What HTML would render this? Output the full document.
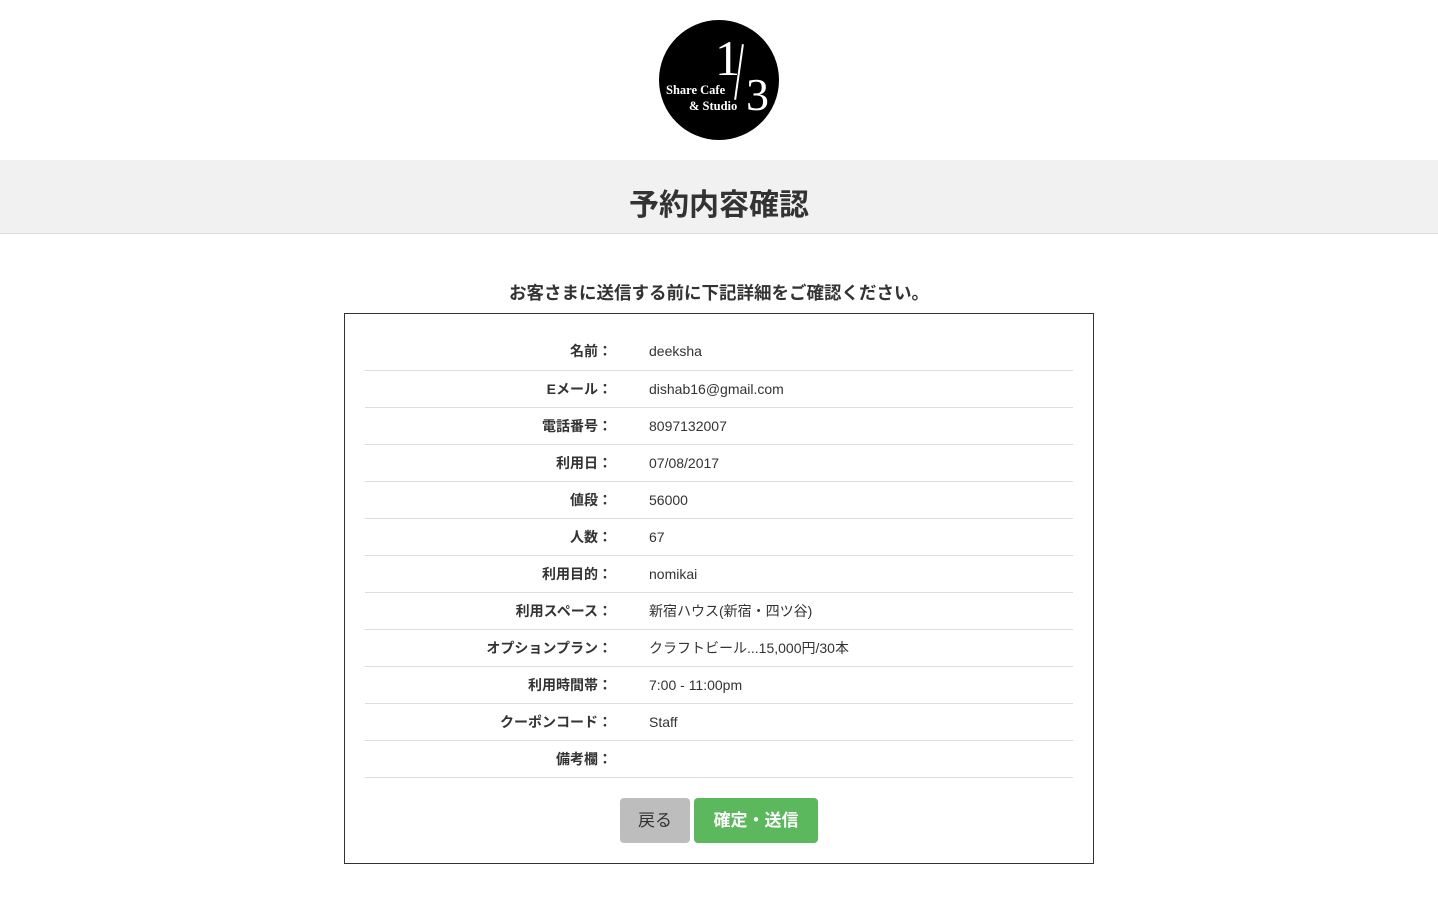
<!DOCTYPE html>
<html><head><meta charset="utf-8"><style>
*{margin:0;padding:0;box-sizing:border-box}
body{width:1438px;height:904px;background:#fff;font-family:"Liberation Sans","Noto Sans CJK JP",sans-serif;color:#333;position:relative;overflow:hidden}
.logo{position:absolute;left:659px;top:20px;width:120px;height:120px;border-radius:50%;background:#000;color:#fff;font-family:"Liberation Serif","Noto Serif CJK SC",serif}
.band{position:absolute;left:0;top:160px;width:1438px;height:74px;background:#f1f1f1;border-bottom:1px solid #ddd;text-align:center}
.band h1{font-size:30px;font-weight:bold;padding-top:17px;line-height:58px}
.sub{position:absolute;top:282px;left:0;width:1438px;text-align:center;font-size:17.5px;font-weight:bold;line-height:22px}
.box{position:absolute;left:344px;top:313px;width:750px;height:551px;border:1px solid #333}
table{position:absolute;left:20px;top:19px;width:708px;border-collapse:collapse}
td{height:37px;border-bottom:1px solid #ddd;font-size:14px;vertical-align:middle}
td.l{width:247px;text-align:right;font-weight:bold}
td.v{padding-left:37px}
.btn{position:absolute;top:484px;height:45px;border-radius:4px;color:#fff;font-size:17px;font-weight:bold;line-height:45px;text-align:center}
</style></head><body>
<div class="logo">
<div style="position:absolute;left:56px;top:13px;font-size:50px;line-height:50px">1</div>
<div style="position:absolute;left:79px;top:24px;width:2px;height:56px;background:#fff;transform:rotate(8deg)"></div>
<div style="position:absolute;left:87px;top:52px;font-size:46px;line-height:46px">3</div>
<div style="position:absolute;left:7px;top:63px;font-size:12.5px;font-weight:bold">Share Cafe</div>
<div style="position:absolute;left:30px;top:79px;font-size:12.5px;font-weight:bold">&amp; Studio</div>
</div>
<div class="band"><h1>予約内容確認</h1></div>
<div class="sub">お客さまに送信する前に下記詳細をご確認ください。</div>
<div class="box">
<table>
<tr><td class="l">名前：</td><td class="v">deeksha</td></tr>
<tr><td class="l">Eメール：</td><td class="v">dishab16@gmail.com</td></tr>
<tr><td class="l">電話番号：</td><td class="v">8097132007</td></tr>
<tr><td class="l">利用日：</td><td class="v">07/08/2017</td></tr>
<tr><td class="l">値段：</td><td class="v">56000</td></tr>
<tr><td class="l">人数：</td><td class="v">67</td></tr>
<tr><td class="l">利用目的：</td><td class="v">nomikai</td></tr>
<tr><td class="l">利用スペース：</td><td class="v">新宿ハウス(新宿・四ツ谷)</td></tr>
<tr><td class="l">オプションプラン：</td><td class="v">クラフトビール...15,000円/30本</td></tr>
<tr><td class="l">利用時間帯：</td><td class="v">7:00 - 11:00pm</td></tr>
<tr><td class="l">クーポンコード：</td><td class="v">Staff</td></tr>
<tr><td class="l">備考欄：</td><td class="v"></td></tr>
</table>
<div class="btn" style="left:275px;width:70px;background:#bdbdbd;color:#333;font-weight:normal">戻る</div>
<div class="btn" style="left:349px;width:124px;background:#5cb85c">確定・送信</div>
</div>
</body></html>
